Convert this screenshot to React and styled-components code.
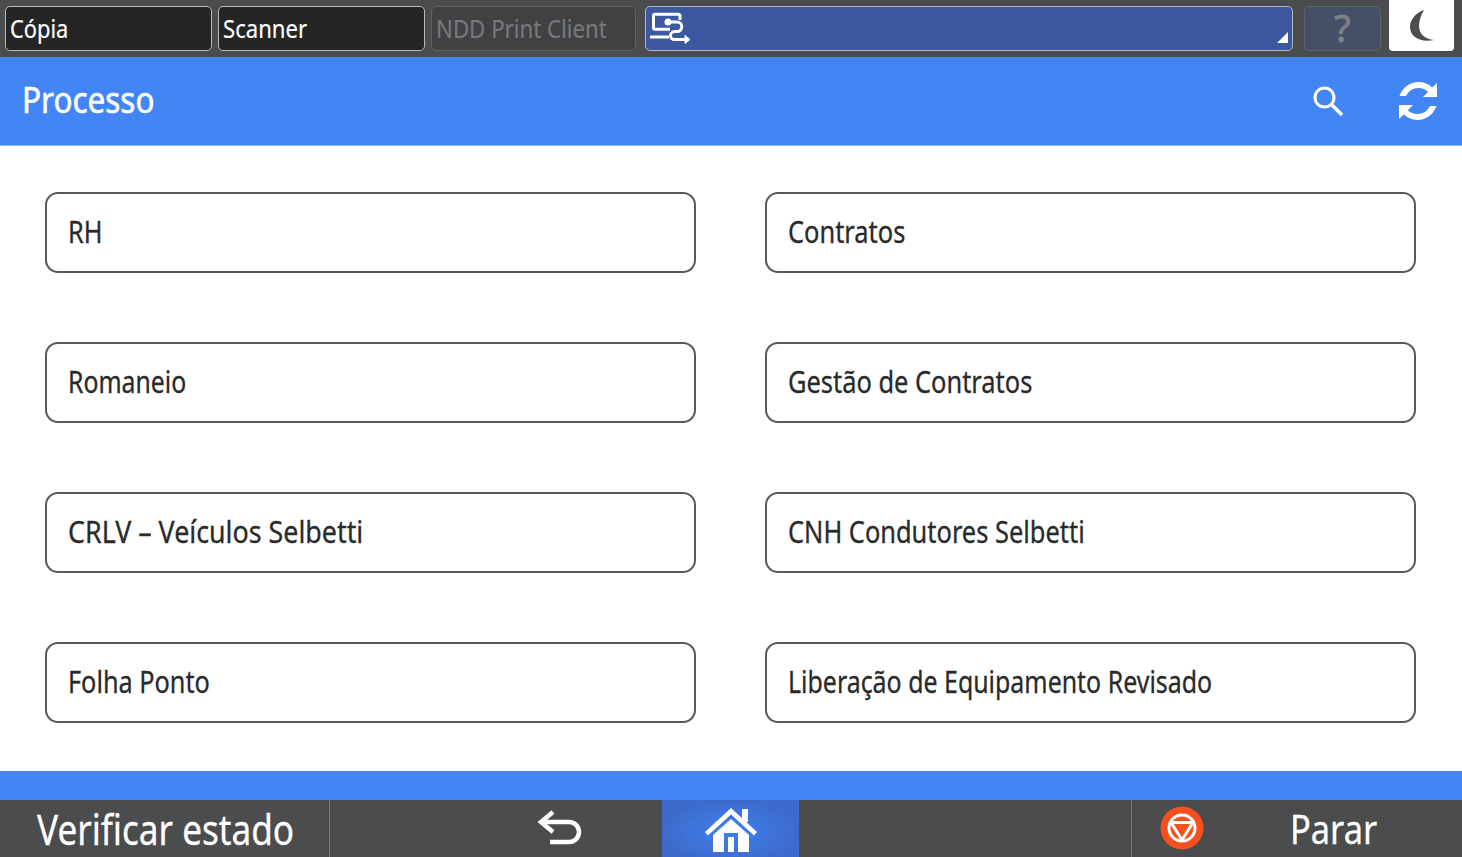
import React from 'react';
import styled, { createGlobalStyle } from 'styled-components';

const GlobalStyle = createGlobalStyle`
  html, body {
    margin: 0;
    padding: 0;
    background: #fff;
    font-family: "Noto Sans", "Open Sans", sans-serif;
  }
`;

const Page = styled.div`
  width: 1462px;
  height: 857px;
  display: flex;
  flex-direction: column;
  overflow: hidden;
`;

// the device panel squeezes its text horizontally
const Squeezed = styled.span`
  display: inline-block;
  white-space: nowrap;
  transform: scaleX(${p => p.$x || 0.815});
  transform-origin: left center;
`;

const TopBar = styled.div`
  height: 57px;
  box-sizing: border-box;
  background: #4b4c4e;
  display: flex;
  align-items: flex-start;
  padding: 6px 8px 0 5px;
`;

const Tab = styled.div`
  width: ${p => p.$w}px;
  height: 45px;
  margin-right: 6px;
  box-sizing: border-box;
  display: flex;
  align-items: center;
  padding: 0 0 1px 4px;
  border-radius: 5px;
  border: 1px solid ${p => (p.$disabled ? '#5f6062' : '#b9b9b9')};
  background: ${p => (p.$disabled ? '#414143' : '#252525')};
  color: ${p => (p.$disabled ? '#77787a' : '#fff')};
  font-size: 26px;
  -webkit-text-stroke: 0.2px currentColor;
`;

const AppSelect = styled.div`
  position: relative;
  width: 648px;
  height: 45px;
  margin-left: 3px;
  box-sizing: border-box;
  display: flex;
  align-items: center;
  padding: 0 0 0 3px;
  border-radius: 5px;
  border: 1px solid #b4b6bc;
  background: #3c58a0;
`;

const Corner = styled.div`
  position: absolute;
  right: 4px;
  bottom: 7px;
  width: 0;
  height: 0;
  border-left: 11px solid transparent;
  border-bottom: 11px solid #fff;
`;

const HelpButton = styled.div`
  width: 77px;
  height: 45px;
  margin-left: 11px;
  box-sizing: border-box;
  display: flex;
  align-items: center;
  justify-content: center;
  border-radius: 5px;
  border: 1px solid #5e626c;
  background: #454f66;
  color: #7d8087;
  font-size: 38px;
  padding-bottom: 3px;
  -webkit-text-stroke: 0.8px #7d8087;
`;

const SleepButton = styled.div`
  width: 65px;
  height: 51px;
  margin: -6px 0 0 8px;
  display: flex;
  align-items: center;
  justify-content: center;
  background: #fff;
  border-radius: 0 0 4px 4px;
`;

const Header = styled.div`
  height: 89px;
  box-sizing: border-box;
  background: #4285f5;
  border-bottom: 1px solid #8db4f5;
  display: flex;
  align-items: center;
  padding: 0 24px 0 22px;
  color: #fff;
`;

const Title = styled.div`
  flex: 1;
  font-size: 37px;
  padding-bottom: 5px;
  -webkit-text-stroke: 0.6px #fff;
`;

const HeaderIcons = styled.div`
  display: flex;
  align-items: center;
  gap: 54px;
`;

const Content = styled.div`
  height: 625px;
  box-sizing: border-box;
  padding: 46px 46px 0 45px;
  display: grid;
  grid-template-columns: 651px 651px;
  grid-auto-rows: 81px;
  column-gap: 69px;
  row-gap: 69px;
  background: #fff;
`;

const ProcessButton = styled.div`
  box-sizing: border-box;
  display: flex;
  align-items: center;
  padding: 0 0 4px 21px;
  border: 2px solid #58595b;
  border-radius: 13px;
  background: #fff;
  color: #2a2a2a;
  font-size: 31px;
  -webkit-text-stroke: 0.3px #2a2a2a;
`;

const BlueStrip = styled.div`
  height: 29px;
  background: #4285f5;
`;

const BottomBar = styled.div`
  flex: 1;
  display: flex;
  background: #4b4c4e;
  color: #fff;
`;

const StatusCell = styled.div`
  width: 330px;
  box-sizing: border-box;
  padding-left: 37px;
  display: flex;
  align-items: center;
  border-right: 1px solid #77787a;
  font-size: 41px;
  -webkit-text-stroke: 0.3px #fff;
`;

const BackCell = styled.div`
  width: 332px;
  box-sizing: border-box;
  display: flex;
  align-items: center;
  padding: 0 0 3px 206px;
`;

const HomeCell = styled.div`
  width: 137px;
  display: flex;
  align-items: center;
  justify-content: center;
  background: radial-gradient(ellipse at 50% 55%, #3f7fee 0%, #3d6bcb 70%);
`;

const Spacer = styled.div`
  flex: 1;
`;

const StopCell = styled.div`
  width: 331px;
  box-sizing: border-box;
  border-left: 1px solid #77787a;
  display: flex;
  align-items: center;
  padding: 0 0 1px 28px;
  font-size: 40px;
  -webkit-text-stroke: 0.3px #fff;
`;

const StopLabel = styled.div`
  margin-left: 86px;
`;

const ProcessFlowIcon = () => (
  <svg width="42" height="34" viewBox="0 0 42 34" fill="none" stroke="#fff" strokeWidth="3">
    <path d="M21 17.300H6a1.500 1.500 0 0 1-1.500-1.500V3.800A1.500 1.500 0 0 1 6 2.300h23.500A1.500 1.500 0 0 1 31 3.800V8" />
    <path d="M1 25h19" />
    <circle cx="19" cy="10" r="3.500" fill="#fff" stroke="none" />
    <path d="M19 10h9a4.800 4.800 0 0 1 0 9.600h-2.500a4 4 0 0 0 0 8H37" />
    <path d="M36 23.500l5 4-5 4z" fill="#fff" strokeWidth="1" />
  </svg>
);

const MoonIcon = () => (
  <svg width="26" height="34" viewBox="0 0 26 34">
    <path d="M15 1C7 4 1 10 1 18c0 9 9 16 24 13C16 30 10 25 10 17c0-6 2-11 5-16z" fill="#4b4c4e" />
  </svg>
);

const SearchIcon = () => (
  <svg width="32" height="32" viewBox="0 0 32 32" fill="none" stroke="#fff">
    <circle cx="12.500" cy="12.500" r="9.500" strokeWidth="3" />
    <path d="M19.500 19.500L30 30" strokeWidth="3.500" />
  </svg>
);

const RefreshIcon = () => (
  <svg width="40" height="40" viewBox="0 0 40 40" fill="#fff">
    <path d="M39 2v14H25l5.200-5.200C27.500 8.300 24 7 20.500 7 15 7 10.500 10 8 15H1.500C4.500 6.500 12 1 20.500 1c5.200 0 10 2 13.700 5.400z" />
    <path d="M1 38V24h14l-5.200 5.200c2.700 2.500 6.200 3.800 9.700 3.800 5.500 0 10-3 12.500-8h6.500C35.500 33.500 28 39 19.500 39c-5.200 0-10-2-13.700-5.400z" />
  </svg>
);

const BackIcon = () => (
  <svg width="46" height="36" viewBox="0 0 46 36" fill="none" stroke="#fff" strokeWidth="4.500">
    <path d="M8 13h25a10 10 0 0 1 0 20H14" />
    <path d="M17 3L5 13l12 10" />
  </svg>
);

const HomeIcon = () => (
  <svg width="54" height="46" viewBox="0 0 54 46" fill="#fff">
    <path d="M38 3h6v13h-6z" />
    <path d="M27 2L1 26l3 3.500L27 8.500l23 21 3-3.500z" />
    <path fillRule="evenodd" d="M27 13L9 29v17h36V29zM20 27h14v19h-4V31h-6v15h-4z" />
  </svg>
);

const StopIcon = () => (
  <svg width="44" height="44" viewBox="0 0 44 44">
    <circle cx="22" cy="22" r="21.500" fill="#f4511e" />
    <circle cx="22" cy="22" r="13" fill="none" stroke="#fff" strokeWidth="3" />
    <path d="M11 16.500h22L22 34z" fill="none" stroke="#fff" strokeWidth="3" strokeLinejoin="round" />
  </svg>
);

const processes = [
  { name: 'RH', x: 0.815 },
  { name: 'Contratos', x: 0.82 },
  { name: 'Romaneio', x: 0.8 },
  { name: 'Gestão de Contratos', x: 0.82 },
  { name: 'CRLV – Veículos Selbetti', x: 0.865 },
  { name: 'CNH Condutores Selbetti', x: 0.82 },
  { name: 'Folha Ponto', x: 0.815 },
  { name: 'Liberação de Equipamento Revisado', x: 0.804 },
];

export default function App() {
  return (
    <Page>
      <GlobalStyle />
      <TopBar>
        <Tab $w={207}><Squeezed $x={0.84}>Cópia</Squeezed></Tab>
        <Tab $w={207}><Squeezed $x={0.85}>Scanner</Squeezed></Tab>
        <Tab $w={205} $disabled><Squeezed $x={0.855}>NDD Print Client</Squeezed></Tab>
        <AppSelect>
          <ProcessFlowIcon />
          <Corner />
        </AppSelect>
        <HelpButton>?</HelpButton>
        <SleepButton><MoonIcon /></SleepButton>
      </TopBar>
      <Header>
        <Title><Squeezed $x={0.85}>Processo</Squeezed></Title>
        <HeaderIcons>
          <SearchIcon />
          <RefreshIcon />
        </HeaderIcons>
      </Header>
      <Content>
        {processes.map(p => (
          <ProcessButton key={p.name}><Squeezed $x={p.x}>{p.name}</Squeezed></ProcessButton>
        ))}
      </Content>
      <BlueStrip />
      <BottomBar>
        <StatusCell><Squeezed $x={0.857}>Verificar estado</Squeezed></StatusCell>
        <BackCell><BackIcon /></BackCell>
        <HomeCell><HomeIcon /></HomeCell>
        <Spacer />
        <StopCell>
          <StopIcon />
          <StopLabel><Squeezed $x={0.86}>Parar</Squeezed></StopLabel>
        </StopCell>
      </BottomBar>
    </Page>
  );
}
